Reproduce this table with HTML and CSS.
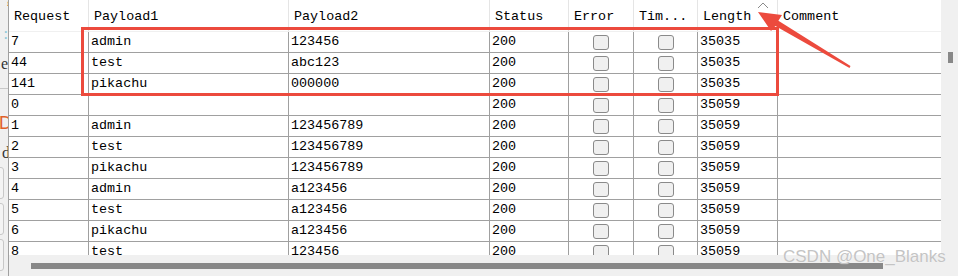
FILE: index.html
```html
<!DOCTYPE html>
<html>
<head>
<meta charset="utf-8">
<link rel="stylesheet" href="styles.css">
</head>
<body>
<div class="window">
  <div class="strip">
    <div class="frag f-top">?</div>
    <div class="frag f-cyan">:</div>
    <div class="frag f-e">e</div>
    <div class="frag f-line"></div>
    <div class="frag f-d1">D</div>
    <div class="frag f-d2">d</div>
    <div class="frag f-btn"></div>
    <div class="frag f-btn"></div>
    <div class="frag f-btn"></div>
  </div>
  <div class="main">
    <div class="area">
      <div class="table">
        <div class="row head">
          <div class="c">Request</div><div class="c">Payload1</div><div class="c">Payload2</div><div class="c">Status</div><div class="c">Error</div><div class="c">Tim...</div><div class="c">Length</div><div class="c last">Comment</div>
        </div>
        <div class="row"><div class="c">7</div><div class="c">admin</div><div class="c">123456</div><div class="c">200</div><div class="c cb"><span class="box"></span></div><div class="c cb"><span class="box"></span></div><div class="c">35035</div><div class="c last"></div></div>
        <div class="row"><div class="c">44</div><div class="c">test</div><div class="c">abc123</div><div class="c">200</div><div class="c cb"><span class="box"></span></div><div class="c cb"><span class="box"></span></div><div class="c">35035</div><div class="c last"></div></div>
        <div class="row"><div class="c">141</div><div class="c">pikachu</div><div class="c">000000</div><div class="c">200</div><div class="c cb"><span class="box"></span></div><div class="c cb"><span class="box"></span></div><div class="c">35035</div><div class="c last"></div></div>
        <div class="row"><div class="c">0</div><div class="c"></div><div class="c"></div><div class="c">200</div><div class="c cb"><span class="box"></span></div><div class="c cb"><span class="box"></span></div><div class="c">35059</div><div class="c last"></div></div>
        <div class="row"><div class="c">1</div><div class="c">admin</div><div class="c">123456789</div><div class="c">200</div><div class="c cb"><span class="box"></span></div><div class="c cb"><span class="box"></span></div><div class="c">35059</div><div class="c last"></div></div>
        <div class="row"><div class="c">2</div><div class="c">test</div><div class="c">123456789</div><div class="c">200</div><div class="c cb"><span class="box"></span></div><div class="c cb"><span class="box"></span></div><div class="c">35059</div><div class="c last"></div></div>
        <div class="row"><div class="c">3</div><div class="c">pikachu</div><div class="c">123456789</div><div class="c">200</div><div class="c cb"><span class="box"></span></div><div class="c cb"><span class="box"></span></div><div class="c">35059</div><div class="c last"></div></div>
        <div class="row"><div class="c">4</div><div class="c">admin</div><div class="c">a123456</div><div class="c">200</div><div class="c cb"><span class="box"></span></div><div class="c cb"><span class="box"></span></div><div class="c">35059</div><div class="c last"></div></div>
        <div class="row"><div class="c">5</div><div class="c">test</div><div class="c">a123456</div><div class="c">200</div><div class="c cb"><span class="box"></span></div><div class="c cb"><span class="box"></span></div><div class="c">35059</div><div class="c last"></div></div>
        <div class="row"><div class="c">6</div><div class="c">pikachu</div><div class="c">a123456</div><div class="c">200</div><div class="c cb"><span class="box"></span></div><div class="c cb"><span class="box"></span></div><div class="c">35059</div><div class="c last"></div></div>
        <div class="row"><div class="c">8</div><div class="c">test</div><div class="c">123456</div><div class="c">200</div><div class="c cb"><span class="box"></span></div><div class="c cb"><span class="box"></span></div><div class="c">35059</div><div class="c last"></div></div>
      </div>
      <div class="vscroll"><div class="vthumb"></div></div>
    </div>
    <div class="hscroll"><div class="hthumb"></div></div>
  </div>
</div>
<svg class="overlay" width="958" height="276" viewBox="0 0 958 276">
  <polyline points="758,8 763,3 768,8" fill="none" stroke="#8a8a8a" stroke-width="1"/>
  <rect x="82.5" y="28.5" width="695" height="66" fill="none" stroke="#ec4a3d" stroke-width="3"/>
  <polygon points="758,12 782,15 778.4,20.7 850.5,66.1 849.5,67.9 775.4,25.9 771,31" fill="#ec4a3d"/>
</svg>
<div class="watermark">CSDN @One_Blanks</div>
</body>
</html>
```
FILE: styles.css
```css
html, body {
  margin: 0;
  padding: 0;
}
body {
  width: 958px;
  height: 276px;
  overflow: hidden;
  background: #f0f0f0;
  position: relative;
  font-family: "Liberation Mono", "DejaVu Sans Mono", monospace;
  font-size: 13.4px;
  color: #000;
}
.window {
  display: flex;
  height: 276px;
}
.strip {
  width: 8px;
  border-right: 1px solid #a0a0a0;
  background: #f0f0f0;
  overflow: hidden;
  display: flex;
  flex-direction: column;
  align-items: flex-end;
  flex-shrink: 0;
}
.frag {
  font-family: "Liberation Serif", serif;
  font-size: 16px;
  line-height: 16px;
  white-space: nowrap;
}
.f-top { color: #e0602a; height: 8px; margin-top: -6px; margin-right: -3px; font-size: 12px; }
.f-cyan { color: #8cc8d8; height: 16px; margin-top: 24px; margin-right: 0; }
.f-e { color: #333; height: 16px; margin-top: 14px; margin-right: 0; }
.f-line { width: 8px; height: 1px; background: #c8c8c8; margin-top: 16px; }
.f-d1 { color: #e0602a; font-size: 18px; height: 18px; margin-top: 26px; margin-right: -4px; font-family: "Liberation Sans", sans-serif; }
.f-d2 { color: #333; height: 16px; margin-top: 12px; margin-right: -2px; }
.f-btn {
  width: 12px;
  height: 30px;
  border: 1px solid #c8c8c8;
  border-radius: 3px;
  margin-right: 4px;
  margin-top: 4px;
  background: #f4f4f4;
  flex-shrink: 0;
}
.f-d2 + .f-btn { margin-top: 6px; }
.main {
  flex: 1;
  display: flex;
  flex-direction: column;
  min-width: 0;
}
.area {
  display: flex;
  height: 255px;
  overflow: hidden;
}
.table {
  width: 932px;
  background: #fff;
  flex-shrink: 0;
}
.row {
  display: grid;
  grid-template-columns: 80px 200px 201px 79px 65px 64px 80px 163px;
  height: 21px;
  box-sizing: border-box;
  border-bottom: 1px solid #a0a0a0;
}
.c {
  box-sizing: border-box;
  border-right: 1px solid #a0a0a0;
  padding-left: 2px;
  line-height: 20px;
  white-space: nowrap;
  overflow: hidden;
}
.c.last { border-right: none; }
.row.head {
  height: 32px;
  border-bottom: 1px solid #f0f0f0;
}
.row.head .c {
  border-right: 1px solid #e5e5e5;
  padding-left: 5px;
  line-height: 30px;
  padding-top: 2px;
}
.row.head .c.last { border-right: none; }
.cb {
  display: flex;
  justify-content: center;
  align-items: center;
  padding-left: 0;
}
.box {
  width: 16px;
  height: 15px;
  box-sizing: border-box;
  border: 1px solid #8a8a8a;
  border-radius: 3px;
  background: #f0f0f0;
}
.vscroll {
  flex: 1;
  background: #f0f0f0;
  padding-top: 52px;
  padding-left: 7px;
}
.vthumb {
  width: 5px;
  height: 11px;
  background: #888;
}
.hscroll {
  height: 21px;
  background: #f0f0f0;
  padding-top: 8px;
  padding-left: 22px;
  box-sizing: border-box;
}
.hthumb {
  width: 852px;
  height: 6px;
  background: #888;
}
.overlay {
  position: absolute;
  top: 0;
  left: 0;
  pointer-events: none;
}
.watermark {
  position: absolute;
  left: 783px;
  top: 247px;
  font-family: "Liberation Sans", Arial, sans-serif;
  font-size: 17px;
  color: #c4c4c4;
  white-space: nowrap;
  text-shadow: 0 0 1px #fff;
}
```
